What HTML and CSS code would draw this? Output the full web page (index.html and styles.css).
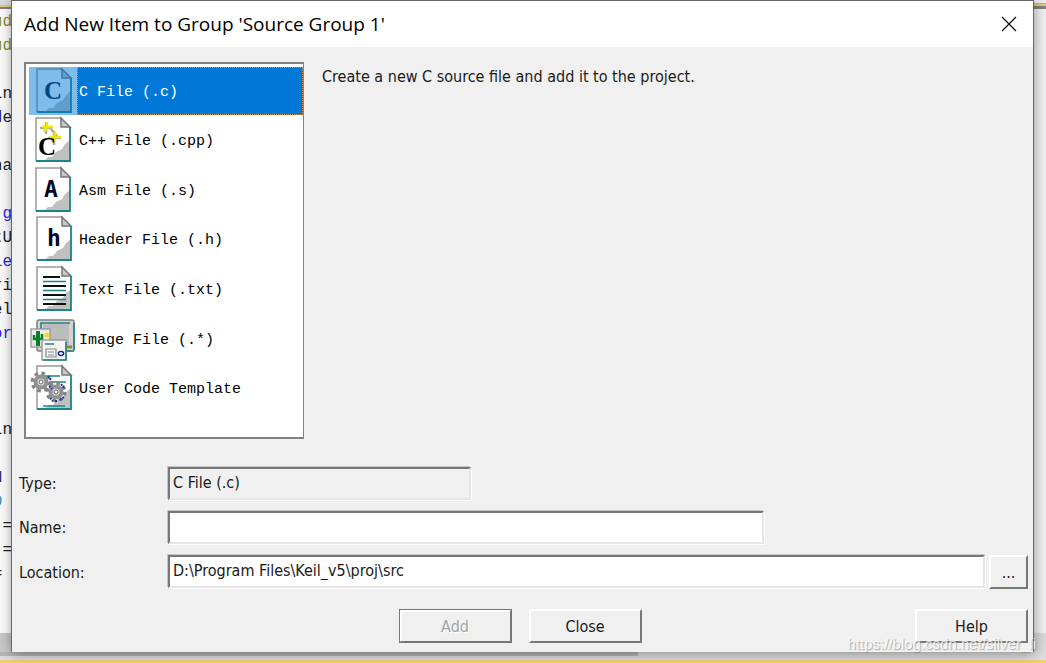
FILE: index.html
```html
<!DOCTYPE html>
<html lang="en">
<head>
<meta charset="utf-8">
<title>Add New Item to Group 'Source Group 1'</title>
<link rel="stylesheet" href="styles.css">
</head>
<body>
<svg class="defs" aria-hidden="true">
  <defs>
    <g id="sheet">
      <path d="M8 2H34L42 11V45H8Z" fill="#fff"/>
      <path d="M16 45L20 41H24L28 36L34 33L37 28L42 24V45Z" fill="#c0c0c0"/>
      <path d="M8 45V2H34" fill="none" stroke="#999" stroke-width="1.5"/>
      <path d="M33 2V11H42L33 2Z" fill="#c8c8c8" stroke="#777" stroke-width="1.5"/>
      <path d="M42 11V45H8" fill="none" stroke="#1b8584" stroke-width="1.8"/>
    </g>
    <g id="gear">
      <circle r="8.5" fill="none" stroke="#858585" stroke-width="4" stroke-dasharray="3.4 3.3"/>
      <circle r="5.5" fill="#d8d8d8" stroke="#929292" stroke-width="4"/>
      <circle r="2" fill="#fff" stroke="#666"/>
    </g>
  </defs>
</svg>
<div class="screen">
  <aside class="editor" aria-hidden="true">
    <pre class="code"><span class="pre">ud</span>
<span class="pre">ud</span>

in
<span class="type">d</span>e

na

<span class="kw">.g</span>
tU
<span class="kw">le</span>
ri
el
<span class="kw">or</span>



in

<span class="type">N</span>
<span class="num">0</span>
 =
 =
=</pre>
  </aside>
  <main class="dialog">
    <header class="titlebar">
      <h1 class="title">Add New Item to Group 'Source Group 1'</h1>
      <button class="dismiss" type="button" aria-label="Close window">
        <svg width="16" height="16" viewBox="0 0 16 16"><path d="M1 1L15 15M15 1L1 15" stroke="#111" stroke-width="1.3"/></svg>
      </button>
    </header>
    <section class="chooser">
      <div class="list" role="listbox" aria-label="File type">
        <button class="item selected" type="button" role="option" aria-selected="true">
          <svg class="icon" viewBox="0 0 48 48"><use href="#sheet"/><text class="glyph serif" x="24" y="32">C</text><rect class="tint" width="48" height="48"/></svg>
          <span class="caption">C File (.c)</span>
        </button>
        <button class="item" type="button" role="option" aria-selected="false">
          <svg class="icon" viewBox="0 0 48 48"><g transform="translate(-1 0)"><use href="#sheet"/></g>
            <path d="M17 6V18M11 12H23M25 15V29M19 22H32M22 13L28 20" stroke="#aaa" stroke-width="2.5"/>
            <path d="M18 6V11H24M18 11L15 16M13 11H18M26 16V21H32M26 21L23 26M21 21H26" fill="none" stroke="#f0e800" stroke-width="2.4"/>
            <text class="glyph serif dark" x="18" y="39">C</text></svg>
          <span class="caption">C++ File (.cpp)</span>
        </button>
        <button class="item" type="button" role="option" aria-selected="false">
          <svg class="icon" viewBox="0 0 48 48"><g transform="translate(-1 0)"><use href="#sheet"/></g><text class="glyph mono" x="22" y="31">A</text></svg>
          <span class="caption">Asm File (.s)</span>
        </button>
        <button class="item" type="button" role="option" aria-selected="false">
          <svg class="icon" viewBox="0 0 48 48"><use href="#sheet"/><text class="glyph mono" x="25" y="31">h</text></svg>
          <span class="caption">Header File (.h)</span>
        </button>
        <button class="item" type="button" role="option" aria-selected="false">
          <svg class="icon" viewBox="0 0 48 48"><use href="#sheet"/>
            <path d="M14 12H31M14 21H37M14 30H37M14 39H37" stroke="#111" stroke-width="1.8"/>
            <path d="M14 16.500H37M14 25.500H37M14 34.500H37" stroke="#1b8584" stroke-width="1.6"/></svg>
          <span class="caption">Text File (.txt)</span>
        </button>
        <button class="item" type="button" role="option" aria-selected="false">
          <svg class="icon" viewBox="0 0 48 48">
            <rect x="8" y="5" width="37" height="31" rx="2" fill="#d2d2d2" stroke="#808080" stroke-width="1.5"/>
            <path d="M14 9H40V30H14Z" fill="#bcbcbc"/><path d="M12 27V8H41M45 8V35M36 36H45" fill="none" stroke="#1b8584" stroke-width="1.6"/>
            <path d="M38 32H43" stroke="#998c12" stroke-width="3"/>
            <rect x="2" y="14" width="19" height="18" fill="#eee" stroke="#999" stroke-width="1.4"/>
            <path d="M3 31V26L7 29L13 26L20 29V31Z" fill="#ddd"/>
            <path d="M9 31V16" stroke="#087e28" stroke-width="4"/>
            <path d="M5 20V24H13V19" fill="none" stroke="#087e28" stroke-width="2.5"/>
            <circle cx="18" cy="20" r="2.5" fill="#f0df00"/>
            <rect x="13" y="25" width="24" height="20" fill="#f4f4f4" stroke="#999" stroke-width="1.4"/>
            <path d="M14 45H37V27M16 29H25" fill="none" stroke="#1b8584" stroke-width="1.6"/>
            <path d="M17 34H27V42H17ZM19 37H25M19 40H25" fill="none" stroke="#888" stroke-width="1.2"/>
            <ellipse cx="32" cy="38.500" rx="2.600" ry="2" fill="#fff" stroke="#1717a5" stroke-width="1.4"/>
          </svg>
          <span class="caption">Image File (.*)</span>
        </button>
        <button class="item" type="button" role="option" aria-selected="false">
          <svg class="icon" viewBox="0 0 48 48"><use href="#sheet"/>
            <path d="M14 12H31M20 18H37M14 42H36" stroke="#1b8584" stroke-width="1.5"/>
            <use href="#gear" x="12" y="18"/><use href="#gear" x="27" y="28"/>
            <path d="M19 12L22 16M20 22L23 25M32 20L36 25M35 33L31 36M21 34L24 37M26 37H29" stroke="#242d91" stroke-width="2" stroke-dasharray="2 1"/></svg>
          <span class="caption">User Code Template</span>
        </button>
      </div>
      <p class="hint">Create a new C source file and add it to the project.</p>
    </section>
    <form class="fields">
      <label for="type">Type:</label>
      <input class="box type-box" id="type" type="text" value="C File (.c)" readonly>
      <label for="name">Name:</label>
      <input class="box name-box" id="name" type="text">
      <label for="location">Location:</label>
      <div class="path">
        <input class="box path-box" id="location" type="text" value="D:\Program Files\Keil_v5\proj\src">
        <button class="button browse" type="button" aria-label="Browse">...</button>
      </div>
    </form>
    <footer class="actions">
      <span></span>
      <div class="pair">
        <button class="button default" type="button" disabled>Add</button>
        <button class="button" type="button">Close</button>
      </div>
      <button class="button help" type="button">Help</button>
    </footer>
  </main>
  <div class="edge" aria-hidden="true"></div>
  <div class="status" aria-hidden="true"><span class="thumb"></span></div>
  <span class="watermark">https://blog.csdn.net/silver_li</span>
</div>
</body>
</html>
```
FILE: styles.css
```css
* { box-sizing: border-box; }
body { margin: 0; background: #f4f4f4; font-family: "DejaVu Sans Condensed", "DejaVu Sans", sans-serif; font-size: 16px; color: #1a1a1a; }
button, input { font: inherit; color: inherit; }
.defs { position: absolute; width: 0; height: 0; }
.screen { position: relative; display: grid; grid-template-columns: 12px minmax(0, 1fr) 12px; grid-template-rows: 1fr 11px; min-height: 100vh; overflow: hidden; }
.editor { display: flex; justify-content: flex-end; min-width: 0; overflow: hidden; padding-top: 10px; background: linear-gradient(#d9d9d9 0 5px, #e5ca79 5px 7px, #808080 7px 9px, transparent 9px), linear-gradient(#fcfcfc calc(100% - 19px), #c8c8c8 0); }
.code { flex: none; margin: 0; font: 16px/24px "Liberation Mono", monospace; color: #222; }
.pre { color: #8c8c20; }
.type { color: #20207a; }
.kw { color: #2525e8; }
.num { color: #3988b5; }
.edge { background: linear-gradient(#eee 0 3px, #b0b0b0 3px 4px, #e5ca79 4px 6px, #808080 6px 9px, transparent 9px), linear-gradient(#f0f0f0 calc(100% - 19px), #dadada 0); }
.dialog { position: relative; display: flex; flex-direction: column; background: #f0f0f0; border: 1px solid #686868; border-width: 1px 1px 0 0; box-shadow: -1px 0 #686868, 0 1px 12px rgba(0, 0, 0, .42); }
.titlebar { display: flex; align-items: center; justify-content: space-between; height: 46px; padding: 0 16px 0 12px; background: #fff; }
.title { margin: 0; font: 400 19px/28px "Open Sans", sans-serif; color: #000; }
.dismiss { display: flex; padding: 0; border: 0; background: none; }
.chooser { display: flex; gap: 18px; padding: 15px 12px 0; }
.list { width: 280px; display: grid; grid-auto-rows: 1fr; height: 377px; padding: 2px 0 24px 3px; border: 2px solid #828282; border-right-width: 1px; background: #fff; }
.item { display: flex; align-items: center; padding: 0; border: 0; background: none; text-align: left; font: 15px/20px "Liberation Mono", monospace; color: #000; }
.icon { flex: none; width: 48px; height: 48px; }
.caption { flex: 1; height: 48px; padding-left: 2px; line-height: 51px; white-space: pre; }
.selected .caption { background: #0078d7; color: #fff; outline: 1px dotted #c98b55; outline-offset: -1px; }
.tint { fill: #0078d7; fill-opacity: .5; }
.glyph { text-anchor: middle; fill: #051533; font-weight: 700; }
.serif { font-family: "Liberation Serif", serif; font-size: 25px; }
.dark { fill: #000; }
.mono { font-family: "DejaVu Sans Mono", monospace; font-size: 23px; fill: #050528; }
.hint { margin: 0; line-height: 30px; }
.fields { display: grid; grid-template-columns: 149px minmax(0, 1fr); row-gap: 11px; align-items: center; padding: 28px 5px 0 7px; }
.box { width: 100%; height: 33px; padding: 0 3px 2px; border: 2px solid; border-color: #777 #e6e6e6 #e6e6e6 #777; box-shadow: 1px 1px #fff, -1px -1px #c6c6c6; background: #fff; border-radius: 0; outline: 0; }
.type-box { width: 303px; background: #f0f0f0; }
.name-box { width: 596px; }
.path { display: flex; gap: 4px; }
.path-box { flex: 1; min-width: 0; }
.button { width: 113px; height: 34px; padding: 0; border: 2px solid; border-color: #fff #787878 #787878 #fff; background: #f0f0f0; }
.browse { width: 39px; }
.default { border-color: #fff #777 #777 #fff; outline: 1px solid #777; outline-offset: -1px; box-shadow: inset 1px 1px #fff; color: #a3a3a3; text-shadow: 1px 1px #fff; }
.actions { display: grid; grid-template-columns: 1fr auto 1fr; padding: 20px 5px 8px 0; }
.pair { display: flex; gap: 17px; }
.help { justify-self: end; }
.status { grid-column: 1 / -1; background: linear-gradient(#dcdcdc 8px, #f3d070 8px); }
.thumb { display: block; width: 61%; height: 4px; background: #b5b5b5; }
.watermark { position: absolute; right: 10px; bottom: 10px; font: 15px/18px "Liberation Sans", sans-serif; color: rgba(255, 255, 255, .8); text-shadow: 1px 1px 1px rgba(120, 120, 120, .6); }
```
